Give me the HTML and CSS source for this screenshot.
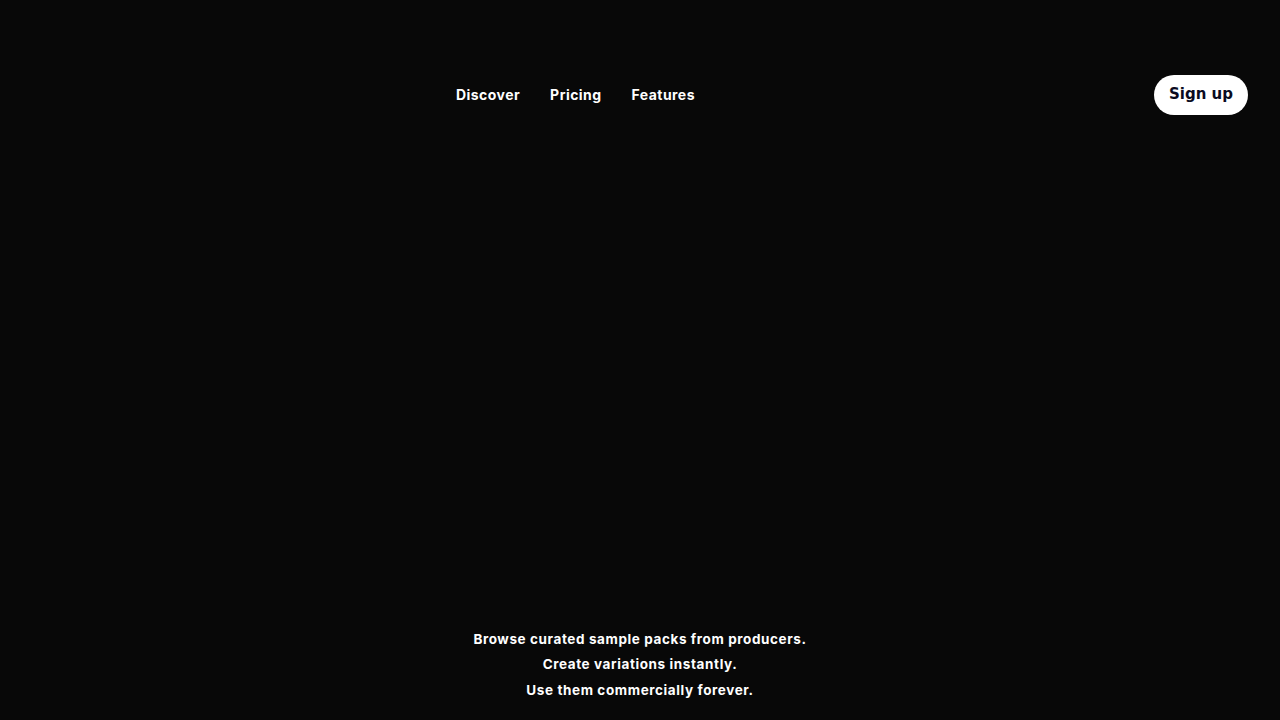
FILE: index.html
```html
<!DOCTYPE html>
<html lang="en">
<head>
<meta charset="utf-8">
<title>Samples</title>
<link rel="stylesheet" href="styles.css">
</head>
<body>
<div class="page">
  <header class="header">
    <div class="brand"></div>
    <nav class="nav">
      <a href="#">Discover</a>
      <a href="#">Pricing</a>
      <a href="#">Features</a>
    </nav>
    <a class="signup" href="#">Sign up</a>
  </header>
  <main class="hero"></main>
  <footer class="tagline">
    <p>Browse curated sample packs from producers.</p>
    <p>Create variations instantly.</p>
    <p>Use them commercially forever.</p>
  </footer>
</div>
</body>
</html>
```
FILE: styles.css
```css
html, body {
  margin: 0;
  padding: 0;
  background: #080808;
  color: #fff;
  font-family: Inter, "Liberation Sans", sans-serif;
}
.page {
  height: 720px;
  display: flex;
  flex-direction: column;
}
.header {
  display: flex;
  align-items: center;
  padding: 75px 32px 0 32px;
  height: 40px;
}
.brand {
  width: 424px;
}
.nav {
  display: flex;
  gap: 30px;
  flex: 1;
  padding-bottom: 2px;
}
.nav a {
  color: #fff;
  text-decoration: none;
  font-weight: 700;
  font-size: 14px;
  letter-spacing: 0.45px;
}
.signup {
  display: flex;
  align-items: center;
  justify-content: center;
  width: 94px;
  height: 40px;
  padding-bottom: 2px;
  border-radius: 20px;
  background: #fff;
  color: #0b0b1f;
  text-decoration: none;
  font-family: "DejaVu Sans", sans-serif;
  font-weight: 700;
  font-size: 15px;
  box-sizing: border-box;
}
.hero {
  flex: 1;
}
.tagline {
  text-align: center;
  padding-bottom: 17px;
}
.tagline p {
  margin: 0;
  font-weight: 700;
  font-size: 13.5px;
  line-height: 25.5px;
  letter-spacing: 0.6px;
}
```
